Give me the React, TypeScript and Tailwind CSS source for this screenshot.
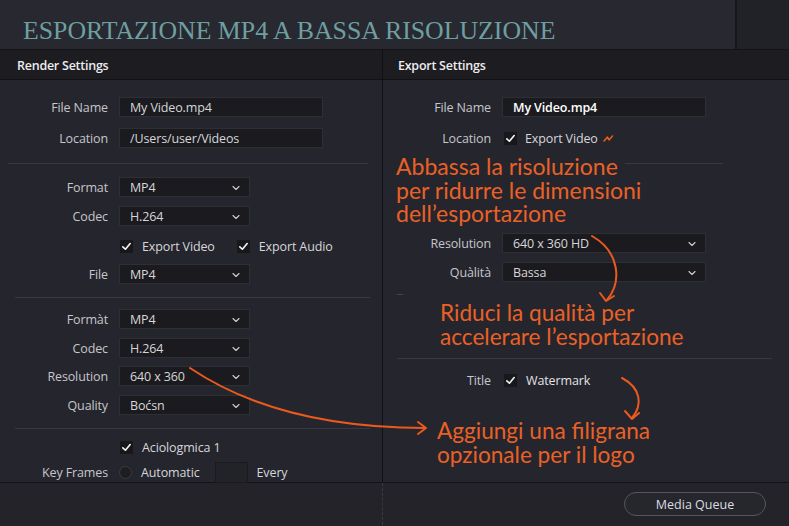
import React from 'react';
import { ChevronDown } from 'lucide-react';

const FONT = { fontFamily: '"Open Sans", "Noto Sans", sans-serif' };
const NOTE = { fontFamily: 'Lato, "Open Sans", sans-serif' };

const Check: React.FC = () => (
  <span className="w-[13px] h-[13px] bg-[#18181c] flex items-center justify-center shrink-0">
    <svg width="11" height="11" viewBox="0 0 12 12" fill="none">
      <path d="M2 6.4 L4.8 9 L10 2.8" stroke="#f2f2f2" strokeWidth="1.8" strokeLinecap="round" strokeLinejoin="round" />
    </svg>
  </span>
);

const Field: React.FC<{ label: string; className?: string; children: React.ReactNode }> = ({ label, className = '', children }) => (
  <div className={`flex items-center h-[20px] gap-[11px] ${className}`}>
    <span className="w-[108px] pt-[3px] text-right text-[12.5px] tracking-[-0.01em] text-[#c6c6cb] shrink-0">{label}</span>
    {children}
  </div>
);

const TextBox: React.FC<{ value: string; bold?: boolean }> = ({ value, bold }) => (
  <div className={`w-[204px] h-[20px] bg-[#1b1b1f] border border-[#2e2e35] flex items-center pt-[2px] pl-[10px] text-[12.5px] tracking-[-0.01em] ${bold ? 'text-white font-semibold' : 'text-[#d6d6da]'}`}>
    {value}
  </div>
);

const Select: React.FC<{ value: string; wide?: boolean }> = ({ value, wide }) => (
  <div className={`${wide ? 'w-[204px]' : 'w-[131px]'} h-[20px] bg-[#1b1b1f] border border-[#2e2e35] flex items-center justify-between pt-[2px] pl-[10px] pr-[7px] text-[12.5px] tracking-[-0.01em] text-[#d6d6da]`}>
    <span>{value}</span>
    <ChevronDown size={12} strokeWidth={2.2} className="text-[#cfcfd4]" />
  </div>
);

const CheckItem: React.FC<{ label: string }> = ({ label }) => (
  <span className="flex items-center gap-[9px] text-[12.5px] tracking-[-0.01em] text-[#d6d6da]">
    <Check />
    <span className="pt-[3px]">{label}</span>
  </span>
);

export default function App() {
  return (
    <div className="relative w-[789px] h-[526px] overflow-hidden bg-[#25252d] select-none" style={FONT}>
      {/* title bar */}
      <div className="flex h-[50px] bg-[#282831] border-b border-[#141418]">
        <div className="flex-1 flex items-center pl-[23px] pt-[12px]">
          <h1 className="text-[25.8px] leading-none text-[#6e9fa0]" style={{ fontFamily: '"Liberation Serif", "DejaVu Serif", serif' }}>
            ESPORTAZIONE MP4 A BASSA RISOLUZIONE
          </h1>
        </div>
        <div className="w-[54px] bg-[#212128] border-l-2 border-[#17171b]" />
      </div>

      {/* section headers */}
      <div className="grid grid-cols-[383px_1fr] h-[30px] bg-[#1c1c21] border-b border-[#121215]">
        <div className="flex items-center pt-[4px] pl-[17px] text-[12.5px] font-semibold text-[#ececee] tracking-[-0.02em] border-r border-[#111114]">
          Render Settings
        </div>
        <div className="flex items-center pt-[4px] pl-[15px] text-[12.5px] font-semibold text-[#ececee] tracking-[-0.02em]">
          Export Settings
        </div>
      </div>

      {/* panels */}
      <div className="grid grid-cols-[383px_1fr] h-[403px] border-b border-[#131317]">
        <div className="flex flex-col border-r border-[#111114]">
          <Field label="File Name" className="mt-[17px]"><TextBox value="My Video.mp4" /></Field>
          <Field label="Location" className="mt-[11px]"><TextBox value="/Users/user/Videos" /></Field>
          <div className="mt-[15px] ml-[8px] w-[360px] h-px bg-[#393942]" />
          <Field label="Format" className="mt-[13px]"><Select value="MP4" /></Field>
          <Field label="Codec" className="mt-[9px]"><Select value="H.264" /></Field>
          <div className="flex items-center h-[20px] mt-[10px] pl-[120px] gap-[22px]">
            <CheckItem label="Export Video" />
            <CheckItem label="Export Audio" />
          </div>
          <Field label="File" className="mt-[8px]"><Select value="MP4" /></Field>
          <div className="mt-[13px] ml-[15px] w-[355px] h-px bg-[#393942]" />
          <Field label="Formàt" className="mt-[11px]"><Select value="MP4" /></Field>
          <Field label="Codec" className="mt-[9px]"><Select value="H.264" /></Field>
          <Field label="Resolution" className="mt-[8px]"><Select value="640 x 360" /></Field>
          <Field label="Quality" className="mt-[9px]"><Select value="Boćsn" /></Field>
          <div className="mt-[13px] ml-[15px] w-[355px] h-px bg-[#393942]" />
          <div className="flex items-center h-[20px] mt-[8px] pl-[120px]">
            <CheckItem label="Aciologmica 1" />
          </div>
          <Field label="Key Frames" className="mt-[5px]">
            <span className="flex items-center gap-[9px] text-[12.5px] tracking-[-0.01em] text-[#d6d6da]">
              <span className="w-[13px] h-[13px] rounded-full bg-[#1d1d22] border border-[#3a3a41]" />
              <span className="pt-[3px]">Automatic</span>
            </span>
            <span className="ml-[4px] w-[33px] h-[21px] bg-[#222229] border border-[#1a1a1f]" />
            <span className="-ml-[2px] pt-[3px] text-[12.5px] tracking-[-0.01em] text-[#d6d6da]">Every</span>
          </Field>
        </div>

        <div className="flex flex-col">
          <Field label="File Name" className="mt-[17px]"><TextBox value="My Video.mp4" bold /></Field>
          <Field label="Location" className="mt-[11px]">
            <span className="flex items-center gap-[8px] pl-[2px] text-[12.5px] tracking-[-0.01em] text-[#d6d6da]">
              <Check />
              <span className="pt-[3px]">Export Video</span>
            </span>
          </Field>
          <div className="mt-[15px] ml-[242px] w-[98px] h-px bg-[#393942]" />
          <Field label="Resolution" className="mt-[69px]"><Select value="640 x 360 HD" wide /></Field>
          <Field label="Quàlità" className="mt-[9px]"><Select value="Bassa" wide /></Field>
          <div className="mt-[12px] ml-[14px] w-[6px] h-px bg-[#45454e]" />
          <div className="mt-[63px] ml-[14px] w-[375px] h-px bg-[#393942]" />
          <Field label="Title" className="mt-[11px]">
            <span className="flex items-center gap-[9px] pl-[2px] text-[12.5px] tracking-[-0.01em] text-[#e2e2e6]">
              <Check />
              <span className="pt-[3px]">Watermark</span>
            </span>
          </Field>
        </div>
      </div>

      {/* bottom bar */}
      <div className="grid grid-cols-[383px_1fr] h-[42px] bg-[#232329]">
        <div className="border-r border-dashed border-[#3a3a42]" />
        <div className="flex items-center justify-end pr-[23px]">
          <button className="w-[142px] h-[24px] rounded-full border border-[#55555e] pt-[2px] text-[12.5px] text-[#dcdce0] bg-[#26262d]">
            Media Queue
          </button>
        </div>
      </div>

      {/* annotations */}
      <div className="absolute left-[396px] top-[155px] text-[23px] leading-[23.5px] text-[#ea6127]" style={NOTE}>
        <p>Abbassa la risoluzione</p>
        <p>per ridurre le dimensioni</p>
        <p>dell’esportazione</p>
      </div>
      <div className="absolute left-[440px] top-[301px] text-[22.6px] leading-[23.5px] text-[#ea6127]" style={NOTE}>
        <p>Riduci la qualità per</p>
        <p>accelerare l’esportazione</p>
      </div>
      <div className="absolute left-[437px] top-[419px] text-[22.6px] leading-[23.5px] text-[#ea6127]" style={NOTE}>
        <p>Aggiungi una filigrana</p>
        <p>opzionale per il logo</p>
      </div>

      <svg className="absolute inset-0 pointer-events-none" width="789" height="526" viewBox="0 0 789 526" fill="none">
        <g stroke="#ea5a1e" strokeWidth="2" strokeLinecap="round" strokeLinejoin="round">
          <path d="M190 368 C 245 405, 320 428, 425 428" />
          <path d="M418 422 L426 428 L418 434" />
          <path d="M592 236 C 620 252, 622 282, 607 300" />
          <path d="M600 293 L606 301 L614 296" />
          <path d="M622 378 C 641 388, 643 405, 632 418" />
          <path d="M625 411 L632 419 L639 413" />
          <path d="M604 141 L607.5 137 L609 140 L612.5 136" strokeWidth="1.6" />
        </g>
      </svg>
    </div>
  );
}
